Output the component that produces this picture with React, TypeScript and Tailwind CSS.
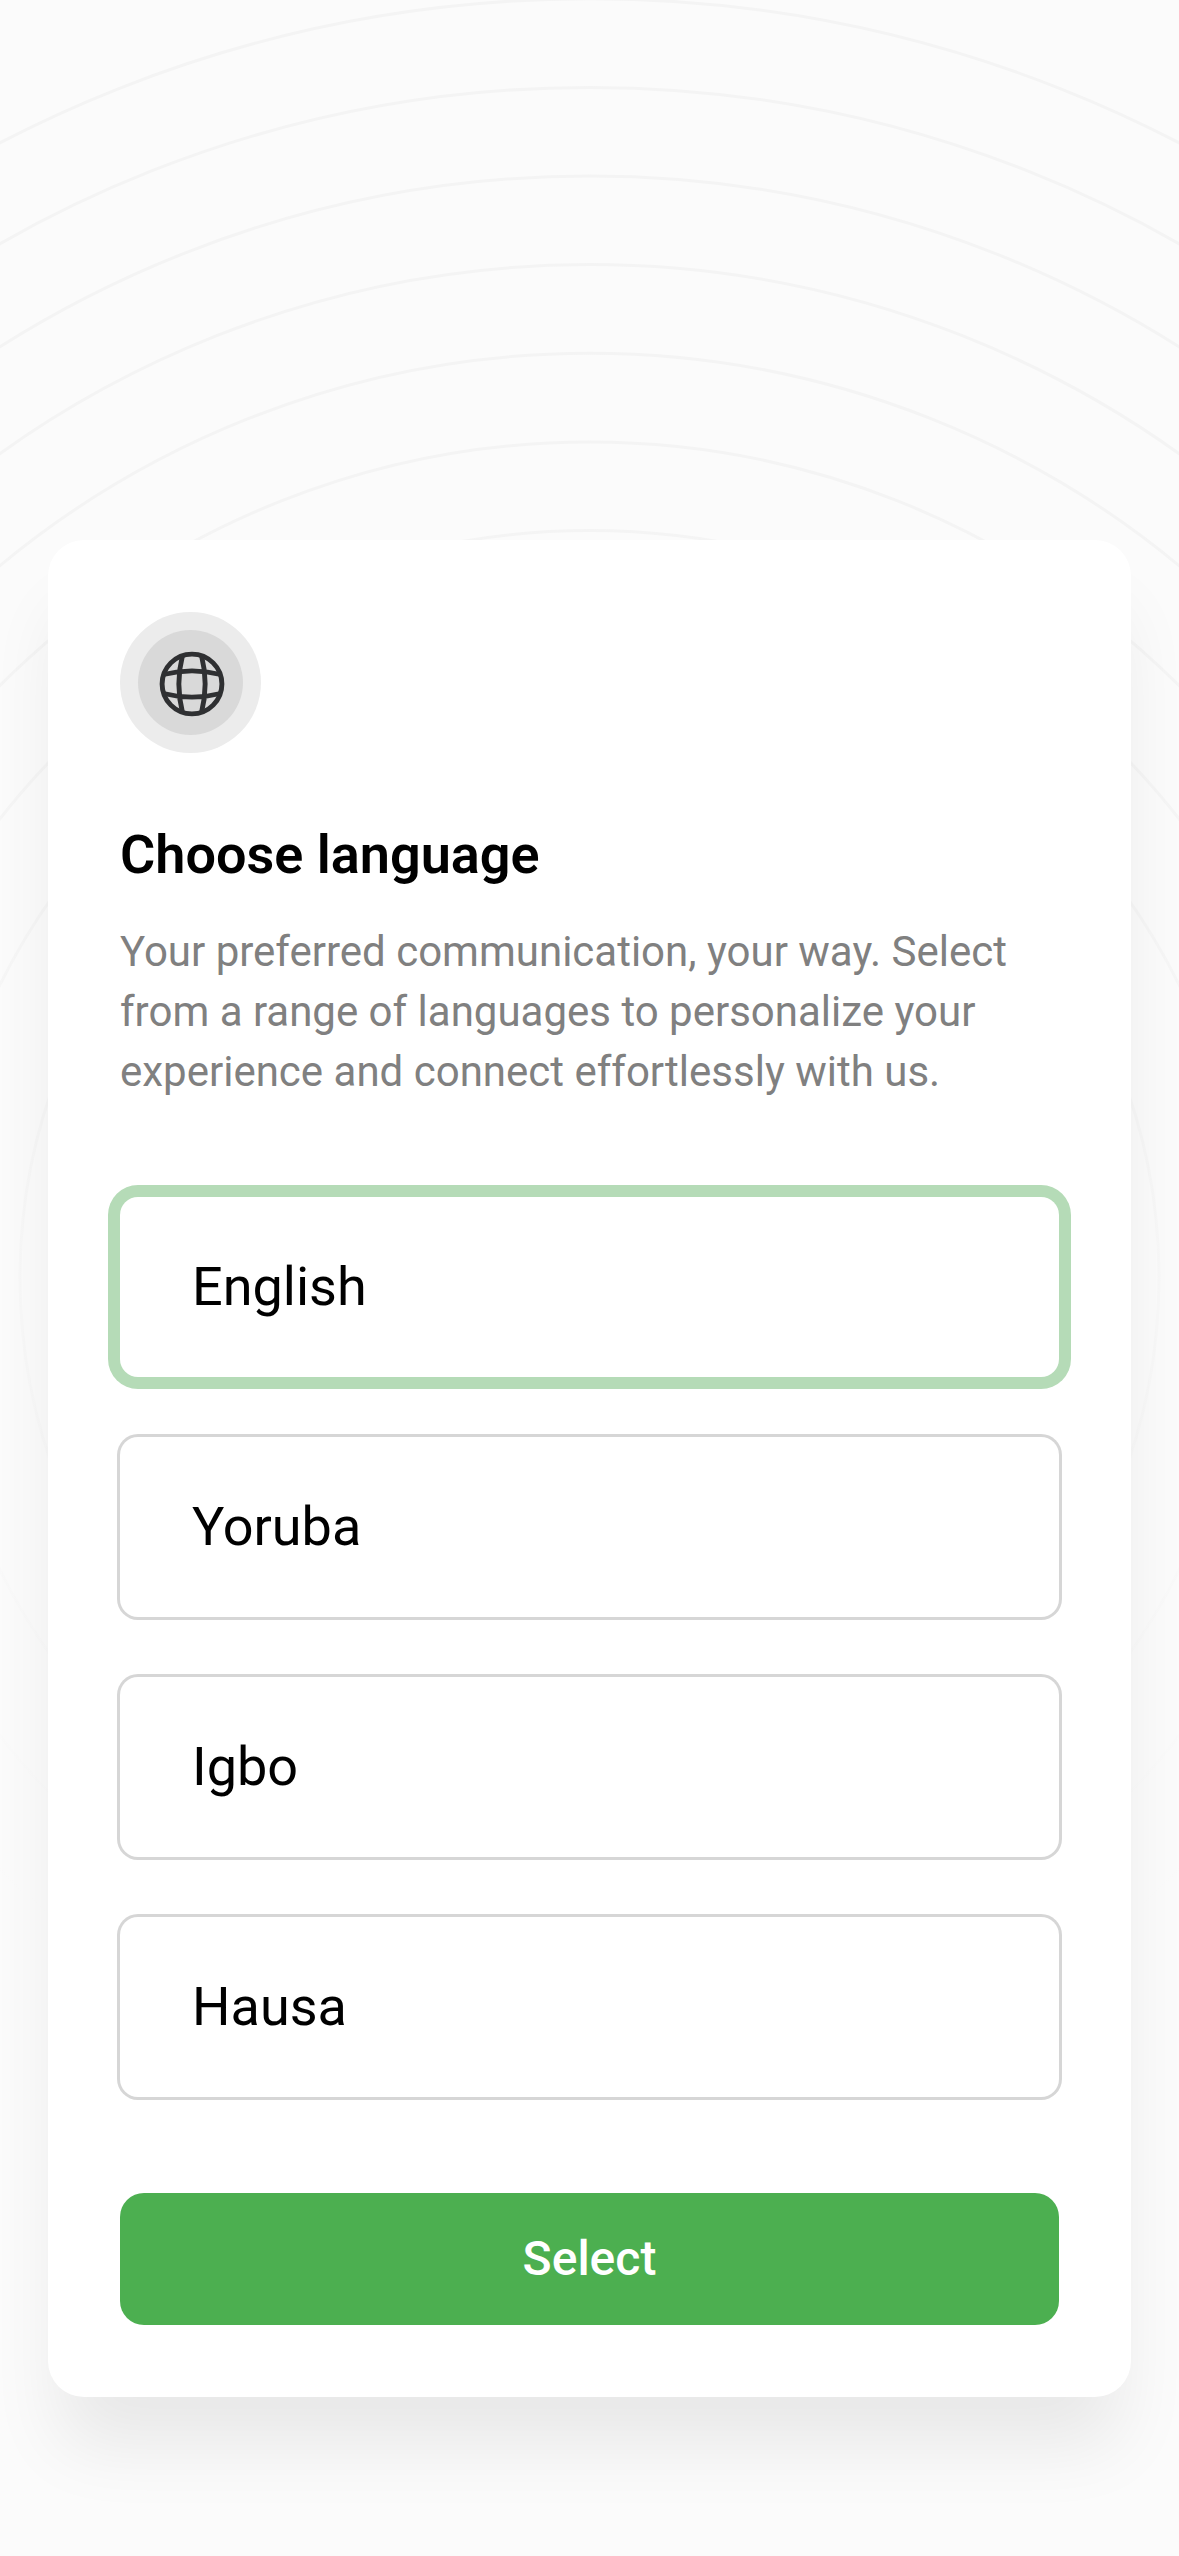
const languages = ["English", "Yoruba", "Igbo", "Hausa"];
const ringRadii = [569.5, 658.1, 746.8, 835.4, 924.1, 1012.8, 1101.4, 1190, 1278.6];

function RingPattern() {
  return (
    <svg
      className="pointer-events-none absolute inset-0 h-[2556px] w-[1179px]"
      viewBox="0 0 1179 2556"
      fill="none"
      aria-hidden="true"
    >
      <defs>
        <linearGradient id="fade" x1="0" y1="0" x2="0" y2="2556" gradientUnits="userSpaceOnUse">
          <stop offset="0.2" stopColor="#f4f4f4" />
          <stop offset="0.75" stopColor="#f4f4f4" stopOpacity="0" />
        </linearGradient>
      </defs>
      {ringRadii.map((r) => (
        <circle key={r} cx="589.5" cy="1277.4" r={r} stroke="url(#fade)" strokeWidth="3" />
      ))}
    </svg>
  );
}

function GlobeIcon() {
  return (
    <svg className="relative left-[1.5px] top-[1.5px] size-[72px]" viewBox="0 0 72 72" fill="none" stroke="#2f3032" strokeWidth="4.9" aria-hidden="true">
      <circle cx="36" cy="36" r="29.9" />
      <path d="M26.5 7.5Q19.2 36 26.5 64.5M45.5 7.5Q52.8 36 45.5 64.5M7.5 26.5Q36 19.2 64.5 26.5M7.5 45.5Q36 52.8 64.5 45.5" />
    </svg>
  );
}

export default function App() {
  return (
    <main className="relative flex h-[2556px] w-[1179px] flex-col overflow-hidden bg-[#fbfbfb] px-12 pt-[540px] font-[Roboto,sans-serif]">
      <RingPattern />
      <section className="relative flex h-[1857px] flex-col rounded-[36px] bg-white px-[72px] pt-[72px] shadow-[0_60px_72px_-12px_rgba(0,0,0,0.08)]">
        <div className="flex size-[141px] items-center justify-center rounded-full bg-[#ececec]">
          <div className="flex size-[105px] items-center justify-center rounded-full bg-[#d9d9d9]">
            <GlobeIcon />
          </div>
        </div>
        <h1 className="mt-[60px] text-[54px] leading-[84px] font-semibold text-black">Choose language</h1>
        <p className="mt-[25px] text-[42px] leading-[60px] whitespace-nowrap text-[#808080]">
          Your preferred communication, your way. Select
          <br />
          from a range of languages to personalize your
          <br />
          experience and connect effortlessly with us.
        </p>
        <div className="mt-[95px] flex flex-col gap-[60px]">
          {languages.map((name, i) => (
            <button
              key={name}
              className={`flex h-[180px] shrink-0 items-center rounded-[18px] bg-white px-[72px] text-[54px] leading-[72px] text-black ${
                i === 0 ? "ring-[12px] ring-[#b5dbb7]" : "ring-[3px] ring-[#d6d6d6]"
              }`}
            >
              {name}
            </button>
          ))}
        </div>
        <button className="mt-[96px] flex h-[132px] shrink-0 items-center justify-center rounded-[24px] bg-[#4caf50] text-[48px] leading-[72px] font-medium text-white">
          Select
        </button>
      </section>
    </main>
  );
}
